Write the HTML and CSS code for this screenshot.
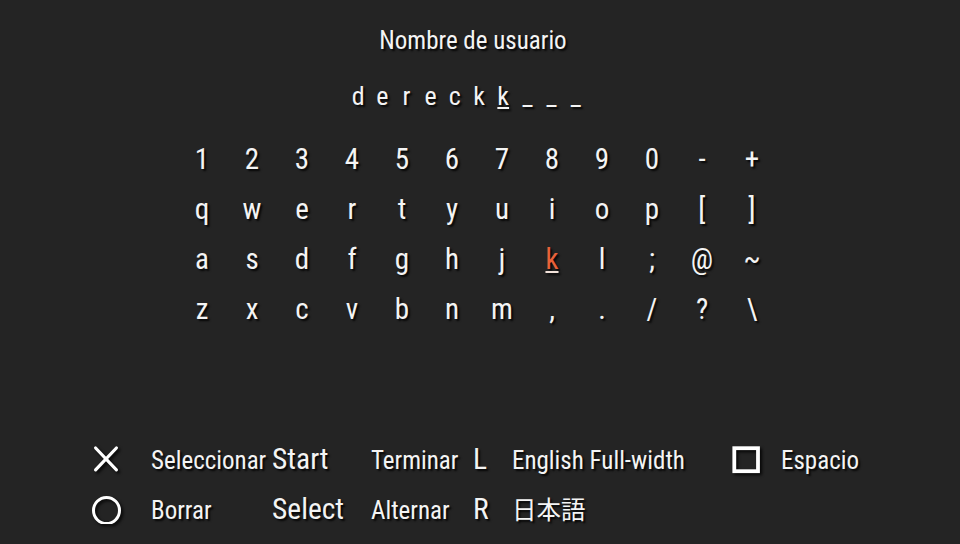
FILE: index.html
```
<!DOCTYPE html>
<html lang="es">
<head>
<meta charset="utf-8">
<title>Nombre de usuario</title>
<link rel="stylesheet" href="styles.css">
</head>
<body>
<main class="screen">
  <h1 class="title">Nombre de usuario</h1>
  <div class="entry">
    <span>d</span><span>e</span><span>r</span><span>e</span><span>c</span><span>k</span><span class="cursor">k</span><span>_</span><span>_</span><span>_</span>
  </div>
  <div class="keyboard">
    <span>1</span><span>2</span><span>3</span><span>4</span><span>5</span><span>6</span><span>7</span><span>8</span><span>9</span><span>0</span><span>-</span><span>+</span>
    <span>q</span><span>w</span><span>e</span><span>r</span><span>t</span><span>y</span><span>u</span><span>i</span><span>o</span><span>p</span><span>[</span><span>]</span>
    <span>a</span><span>s</span><span>d</span><span>f</span><span>g</span><span>h</span><span>j</span><span class="active">k</span><span>l</span><span>;</span><span>@</span><span>~</span>
    <span>z</span><span>x</span><span>c</span><span>v</span><span>b</span><span>n</span><span>m</span><span>,</span><span>.</span><span>/</span><span>?</span><span>\</span>
  </div>
  <div class="legend">
    <span class="icon">
      <svg width="30" height="30" viewBox="0 0 30 30"><path d="M4.6 4 L25.4 25.8 M25.4 4 L4.6 25.8" stroke="#fff" stroke-width="3.2" stroke-linecap="round" fill="none"/></svg>
    </span>
    <span class="lbl">Seleccionar</span>
    <span class="btn">Start</span>
    <span class="lbl">Terminar</span>
    <span class="btn">L</span>
    <span class="lbl">English Full-width</span>
    <span class="icon">
      <svg width="30" height="30" viewBox="0 0 30 30"><rect x="3.3" y="4.2" width="23.7" height="23" stroke="#fff" stroke-width="3.8" fill="none"/></svg>
    </span>
    <span class="lbl">Espacio</span>

    <span class="icon">
      <svg width="30" height="30" viewBox="0 0 30 30"><circle cx="15.5" cy="16.5" r="13" stroke="#fff" stroke-width="3" fill="none"/></svg>
    </span>
    <span class="lbl">Borrar</span>
    <span class="btn">Select</span>
    <span class="lbl">Alternar</span>
    <span class="btn">R</span>
    <span class="lbl jp">日本語</span>
    <span></span>
    <span></span>
  </div>
</main>
</body>
</html>
```
FILE: styles.css
```
html, body {
  margin: 0;
  padding: 0;
  background: #242424;
}
body {
  width: 960px;
  height: 544px;
  overflow: hidden;
  color: #f4f4f4;
  font-family: "Roboto Condensed", "Roboto", "Noto Sans CJK JP", sans-serif;
  font-stretch: condensed;
}
.screen {
  display: flex;
  flex-direction: column;
  align-items: flex-start;
}
.title {
  margin: 26px 0 0 0;
  align-self: center;
  transform: translateX(-7px);
  font-size: 25px;
  font-weight: 400;
  line-height: 30px;
  text-shadow: 2px 2px 2px rgba(0,0,0,0.85);
}
.entry {
  margin-top: 25px;
  margin-left: 346px;
  display: flex;
  font-size: 26px;
  line-height: 30px;
  text-shadow: 2px 2px 2px rgba(0,0,0,0.85);
}
.entry span {
  width: 24.2px;
  text-align: center;
}
.entry .cursor {
  text-decoration: underline;
  text-decoration-thickness: 2px;
  text-underline-offset: 2px;
}
.keyboard {
  margin-top: 22px;
  margin-left: 177px;
  display: grid;
  grid-template-columns: repeat(12, 50px);
  grid-template-rows: 51px 50px 50px 50px;
  font-size: 29px;
  text-shadow: 2px 2px 2px rgba(0,0,0,0.85);
}
.keyboard span {
  display: flex;
  align-items: center;
  justify-content: center;
}
.keyboard .active {
  color: #e8623a;
  text-decoration: underline;
  text-decoration-color: #f2e2da;
  text-decoration-thickness: 2px;
  text-underline-offset: 2px;
}
.legend {
  margin-top: 100px;
  margin-left: 91px;
  display: grid;
  grid-template-columns: 60px 121px 99px 102px 39px 219px 50px auto;
  grid-auto-rows: 50px;
  align-items: baseline;
  font-size: 25px;
  line-height: 50px;
  text-shadow: 2px 2px 2px rgba(0,0,0,0.85);
}
.legend .icon {
  align-self: start;
  display: flex;
  padding-top: 10px;
}
.legend .icon svg {
  filter: drop-shadow(2px 2px 1.5px rgba(0,0,0,0.85));
}
.legend .btn {
  font-size: 29.5px;
}
.legend .jp {
  font-family: "Noto Sans CJK JP", sans-serif;
  font-size: 24.5px;
}
```
